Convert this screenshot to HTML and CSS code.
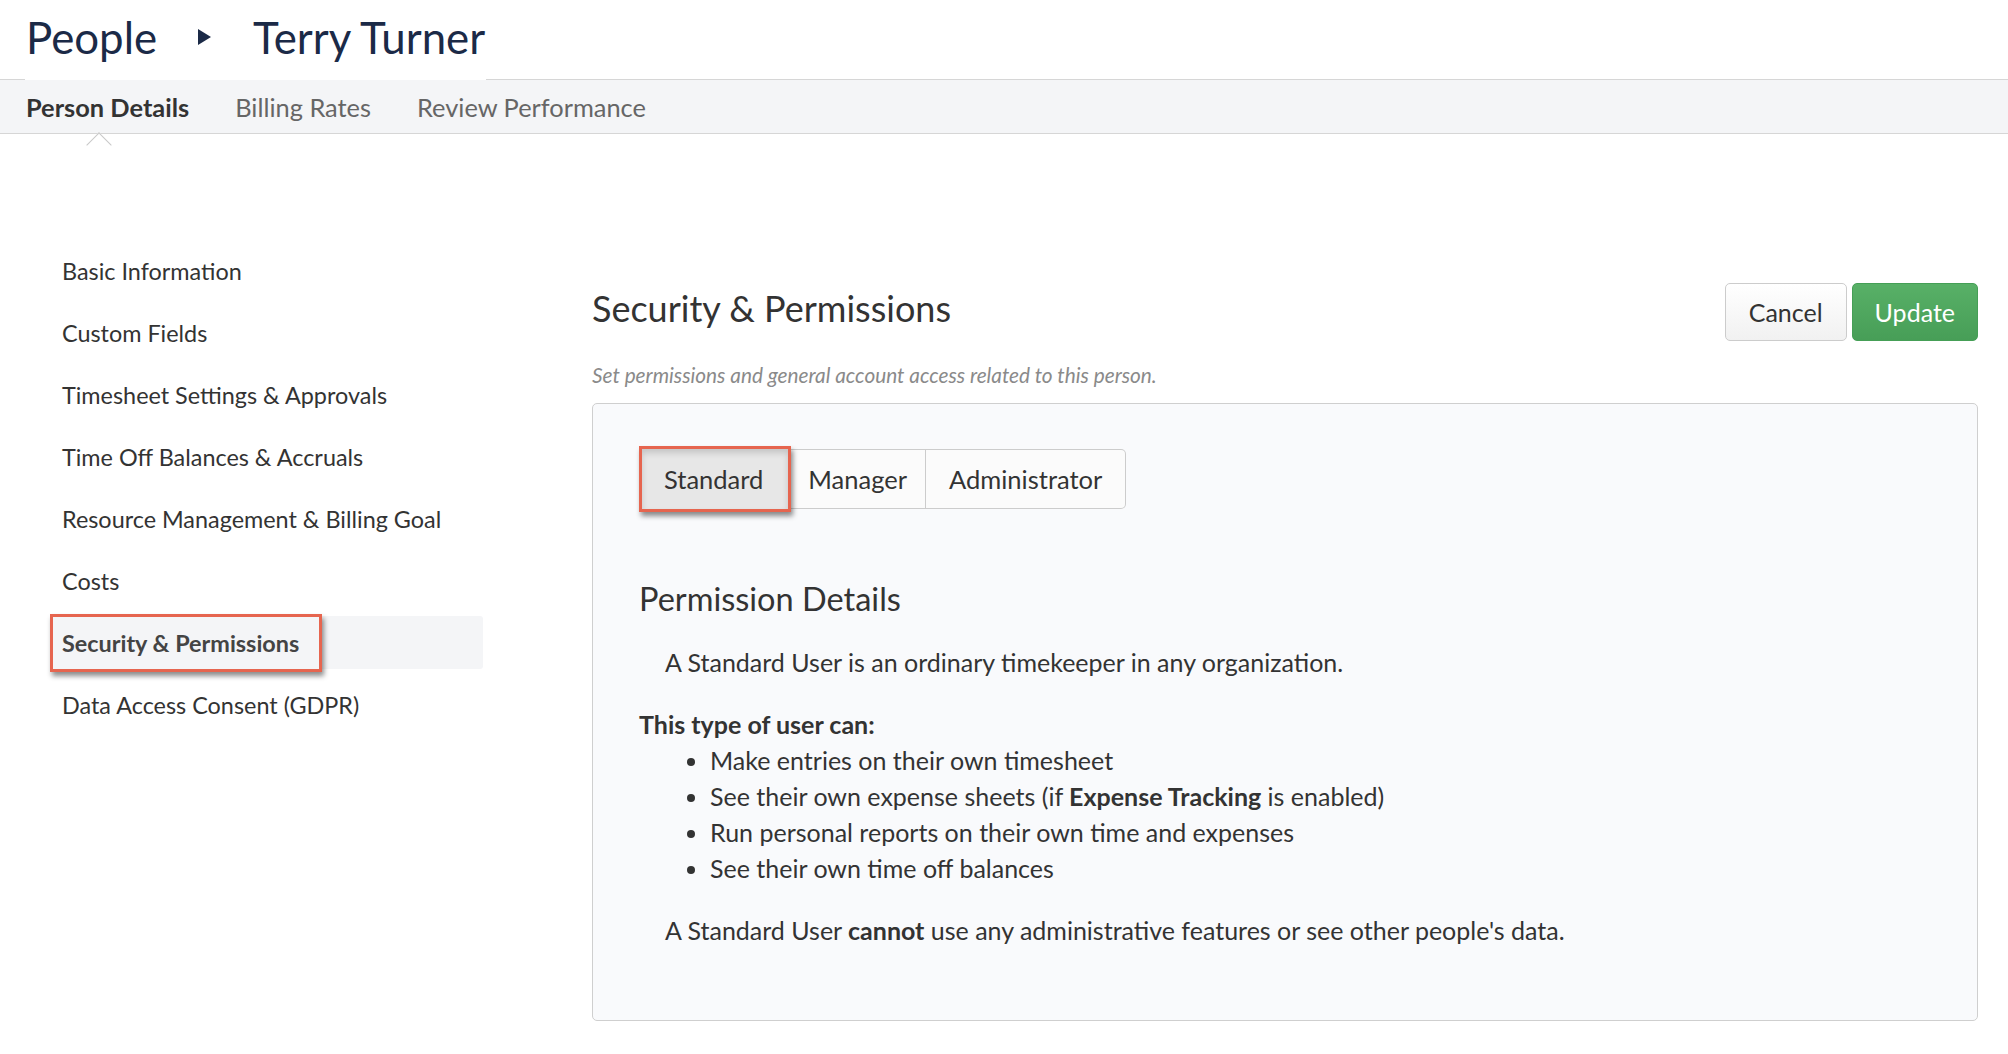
FILE: index.html
```html
<!DOCTYPE html>
<html lang="en">
<head>
    <meta charset="UTF-8">
    <title>Terry Turner - Person Details</title>
    <link rel="stylesheet" href="styles.css">
</head>
<body>

<!-- Page header -->
<header class="page-header">
    <div class="page-title">
        <span class="crumb">People</span>
        <svg class="crumb-arrow" width="13" height="16" viewBox="0 0 13 16"><polygon points="0,0 13,8 0,16" fill="#1b2a47"/></svg>
        <span class="crumb">Terry Turner</span>
    </div>
</header>

<nav class="tabs">
    <a class="tab active">Person Details</a>
    <a class="tab">Billing Rates</a>
    <a class="tab">Review Performance</a>
</nav>

<div class="layout">
    <!-- Left menu -->
    <ul class="side-menu">
        <li>Basic Information</li>
        <li>Custom Fields</li>
        <li>Timesheet Settings &amp; Approvals</li>
        <li>Time Off Balances &amp; Accruals</li>
        <li>Resource Management &amp; Billing Goal</li>
        <li>Costs</li>
        <li class="active"><span class="callout">Security &amp; Permissions</span></li>
        <li>Data Access Consent (GDPR)</li>
    </ul>

    <!-- Main section -->
    <main class="main">
        <div class="section-head">
            <h1>Security &amp; Permissions</h1>
            <div class="actions">
                <button class="btn">Cancel</button>
                <button class="btn btn-green">Update</button>
            </div>
        </div>
        <p class="hint">Set permissions and general account access related to this person.</p>

        <div class="card">
            <div class="segment">
                <button class="seg active">Standard</button>
                <button class="seg">Manager</button>
                <button class="seg">Administrator</button>
            </div>

            <h2>Permission Details</h2>
            <p class="indent">A Standard User is an ordinary timekeeper in any organization.</p>

            <p class="can-title">This type of user can:</p>
            <ul class="can-list">
                <li>Make entries on their own timesheet</li>
                <li>See their own expense sheets (if <b>Expense Tracking</b> is enabled)</li>
                <li>Run personal reports on their own time and expenses</li>
                <li>See their own time off balances</li>
            </ul>

            <p class="indent last">A Standard User <b>cannot</b> use any administrative features or see other people's data.</p>
        </div>
    </main>
</div>

</body>
</html>
```

FILE: styles.css
```css
body {
    margin: 0;
    font-family: Lato, 'Open Sans', sans-serif;
    color: #333;
    background: #fff;
}

/* Header */
.page-header {
    height: 79px;
    display: flex;
    align-items: flex-end;
    padding-left: 25px;
}

.page-title {
    position: relative;
    z-index: 1;
    height: 80px;
    margin-bottom: -1px;
    padding-bottom: 6px;
    box-sizing: border-box;
    display: flex;
    align-items: center;
    background: #fff;
    color: #1b2a47;
    font-size: 43.8px;
}

.crumb {
    padding: 0 1px;
}

.crumb-arrow {
    margin: 0 41px 0 40px;
}

/* Tabs */
.tabs {
    height: 53px;
    display: flex;
    align-items: center;
    gap: 46px;
    padding-left: 26px;
    background: #f4f5f7;
    border-top: 1px solid #d6d6d6;
    border-bottom: 1px solid #d6d6d6;
}

.tab {
    position: relative;
    font-size: 25.4px;
    color: #666;
}

.tab.active {
    color: #333;
    font-weight: bold;
}

.tab.active::after {
    content: "";
    position: absolute;
    left: 64px;
    bottom: -32px;
    width: 17px;
    height: 17px;
    background: #fff;
    border-top: 1px solid #c8c8c8;
    border-left: 1px solid #c8c8c8;
    transform: rotate(45deg);
}

/* Layout */
.layout {
    display: flex;
    padding: 0 30px 0 51px;
}

.side-menu {
    list-style: none;
    margin: 110px 0 0;
    padding: 0;
    width: 432px;
    display: flex;
    flex-direction: column;
    gap: 9px;
}

.side-menu li {
    height: 53px;
    display: flex;
    align-items: center;
    padding-left: 11px;
    font-size: 23.4px;
    color: #333;
}

.side-menu li.active {
    background: #f4f5f7;
    border-radius: 3px;
    font-weight: bold;
    color: #444;
}

.callout {
    height: 58px;
    display: flex;
    align-items: center;
    box-sizing: border-box;
    margin-left: -12px;
    padding: 0 20px 0 9px;
    border: 3px solid #e6654f;
    box-shadow: 2px 4px 5px rgba(0, 0, 0, 0.45);
}

.main {
    flex: 1;
    margin: 149px 0 0 109px;
}

.section-head {
    display: flex;
    justify-content: space-between;
    align-items: flex-start;
}

h1 {
    margin: 0;
    font-size: 36px;
    font-weight: normal;
    line-height: 50px;
}

.actions {
    display: flex;
    gap: 5px;
}

.btn {
    height: 58px;
    padding: 0 23px;
    font-family: inherit;
    font-size: 25px;
    color: #333;
    background: linear-gradient(#fff, #f1f1f1);
    border: 1px solid #ccc;
    border-radius: 5px;
}

.btn-green {
    padding: 0 22px;
    color: #fff;
    background: linear-gradient(#58b067, #479e57);
    border-color: #459f56;
}

.hint {
    margin: 20px 0 0;
    font-size: 20.8px;
    line-height: 28px;
    font-style: italic;
    color: #8a8a8a;
}

/* Card */
.card {
    margin-top: 14px;
    padding: 45px 46px 72px;
    background: #f9fafc;
    border: 1px solid #cfcfcf;
    border-radius: 5px;
}

.segment {
    display: flex;
    align-items: center;
    height: 60px;
}

.seg {
    height: 60px;
    padding: 0 18px;
    font-family: inherit;
    font-size: 25.5px;
    color: #333;
    background: #fbfbfb;
    border: 1px solid #ccc;
    border-left: none;
}

.seg:last-child {
    padding: 0 23px;
    border-radius: 0 5px 5px 0;
}

.seg.active {
    height: 66px;
    padding: 0 25px 0 22px;
    margin-right: -1px;
    position: relative;
    background: #e7e7e7;
    border: 3px solid #e6654f;
    box-shadow: 2px 4px 5px rgba(0, 0, 0, 0.45), inset 0 4px 6px rgba(0, 0, 0, 0.15);
}

h2 {
    margin: 70px 0 0;
    font-size: 32.5px;
    font-weight: normal;
    line-height: 40px;
}

.card p,
.can-list {
    font-size: 25px;
    line-height: 36px;
}

.indent {
    margin: 25px 0 0 26px;
}

.can-title {
    margin: 26px 0 0;
    font-weight: bold;
}

.can-list {
    margin: 0;
    padding-left: 71px;
}

.indent.last {
    margin-top: 26px;
}
```
